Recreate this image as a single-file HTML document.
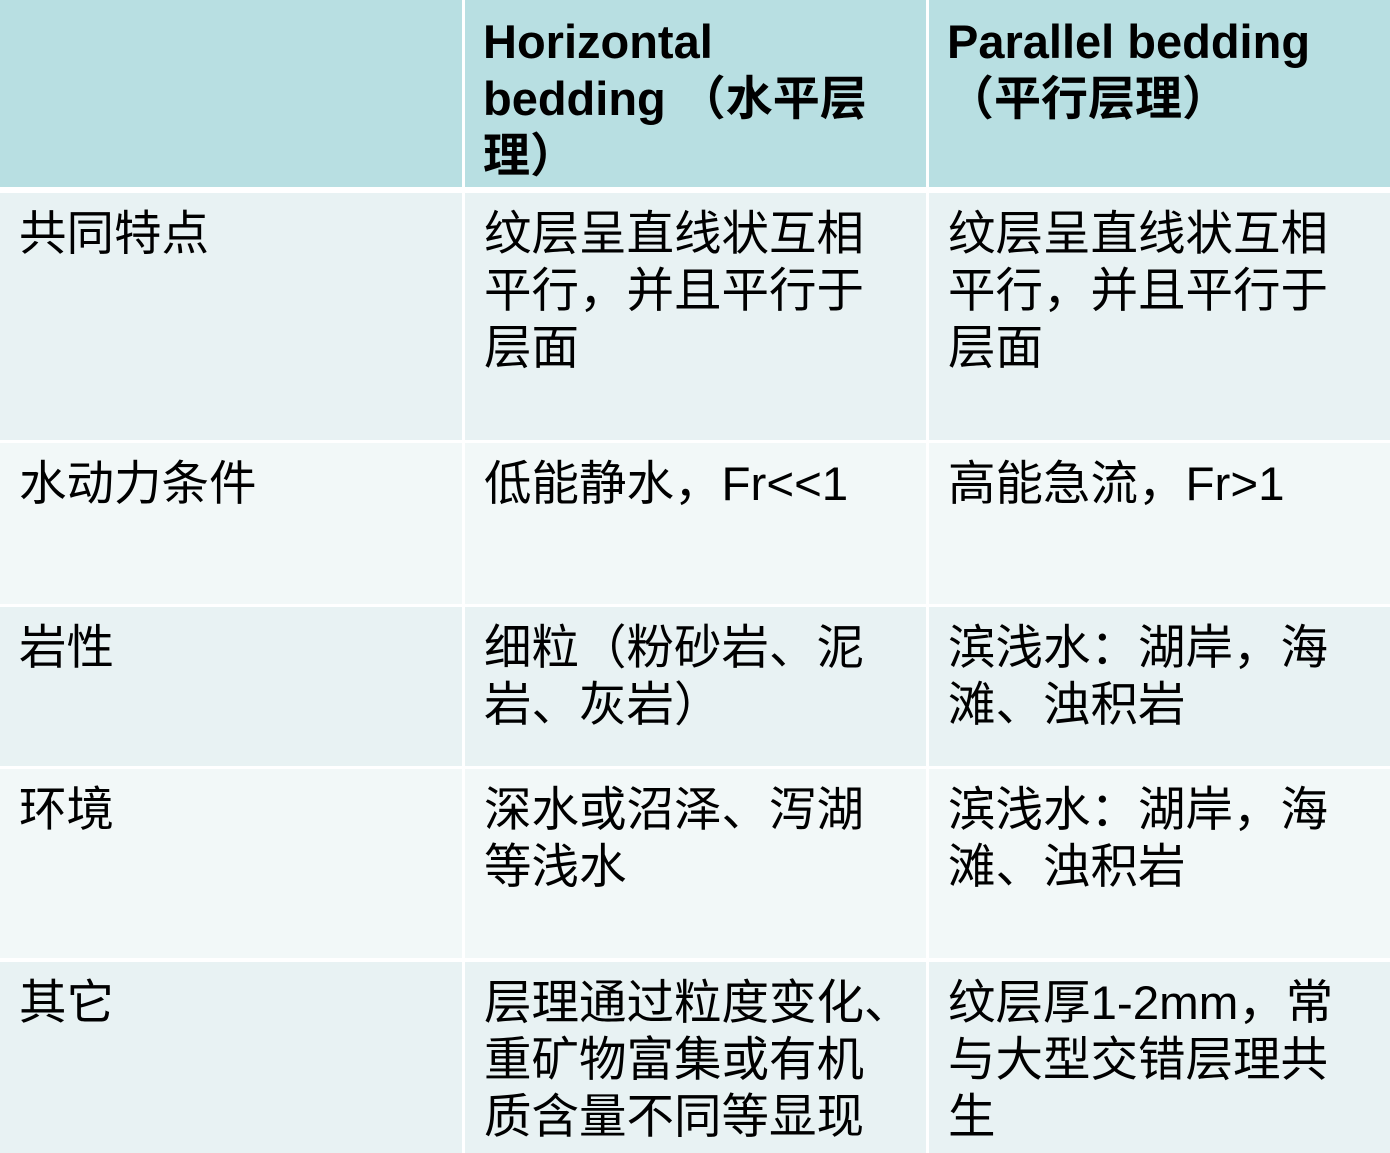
<!DOCTYPE html>
<html><head><meta charset="utf-8"><style>
body{margin:0;width:1390px;height:1153px;background:#fff;overflow:hidden;font-family:"Liberation Sans","Noto Sans CJK SC",sans-serif;}
.c{position:absolute;box-sizing:border-box;padding:13px 0 0 19px;font-size:47.5px;line-height:57px;color:#000;white-space:nowrap;}
.h{background:#b8dfe2;font-weight:bold;font-size:47px;padding-left:18px;}
.a{background:#e8f2f3}
.b{background:#f2f8f8}
</style></head><body>
<div class="c h" style="left:0;top:0;width:462px;height:187px"></div>
<div class="c h" style="left:465px;top:0;width:461px;height:187px">Horizontal<br>bedding （水平层<br>理）</div>
<div class="c h" style="left:929px;top:0;width:461px;height:187px">Parallel bedding<br>（平行层理）</div>

<div class="c a" style="left:0;top:193px;width:462px;height:247px">共同特点</div>
<div class="c a" style="left:465px;top:193px;width:461px;height:247px">纹层呈直线状互相<br>平行，并且平行于<br>层面</div>
<div class="c a" style="left:929px;top:193px;width:461px;height:247px">纹层呈直线状互相<br>平行，并且平行于<br>层面</div>

<div class="c b" style="left:0;top:443px;width:462px;height:161px">水动力条件</div>
<div class="c b" style="left:465px;top:443px;width:461px;height:161px">低能静水，Fr&lt;&lt;1</div>
<div class="c b" style="left:929px;top:443px;width:461px;height:161px">高能急流，Fr&gt;1</div>

<div class="c a" style="left:0;top:607px;width:462px;height:159px">岩性</div>
<div class="c a" style="left:465px;top:607px;width:461px;height:159px">细粒（粉砂岩、泥<br>岩、灰岩）</div>
<div class="c a" style="left:929px;top:607px;width:461px;height:159px">滨浅水：湖岸，海<br>滩、浊积岩</div>

<div class="c b" style="left:0;top:769px;width:462px;height:189px">环境</div>
<div class="c b" style="left:465px;top:769px;width:461px;height:189px">深水或沼泽、泻湖<br>等浅水</div>
<div class="c b" style="left:929px;top:769px;width:461px;height:189px">滨浅水：湖岸，海<br>滩、浊积岩</div>

<div class="c a" style="left:0;top:962px;width:462px;height:191px">其它</div>
<div class="c a" style="left:465px;top:962px;width:461px;height:191px">层理通过粒度变化、<br>重矿物富集或有机<br>质含量不同等显现</div>
<div class="c a" style="left:929px;top:962px;width:461px;height:191px">纹层厚1-2mm，常<br>与大型交错层理共<br>生</div>
</body></html>
